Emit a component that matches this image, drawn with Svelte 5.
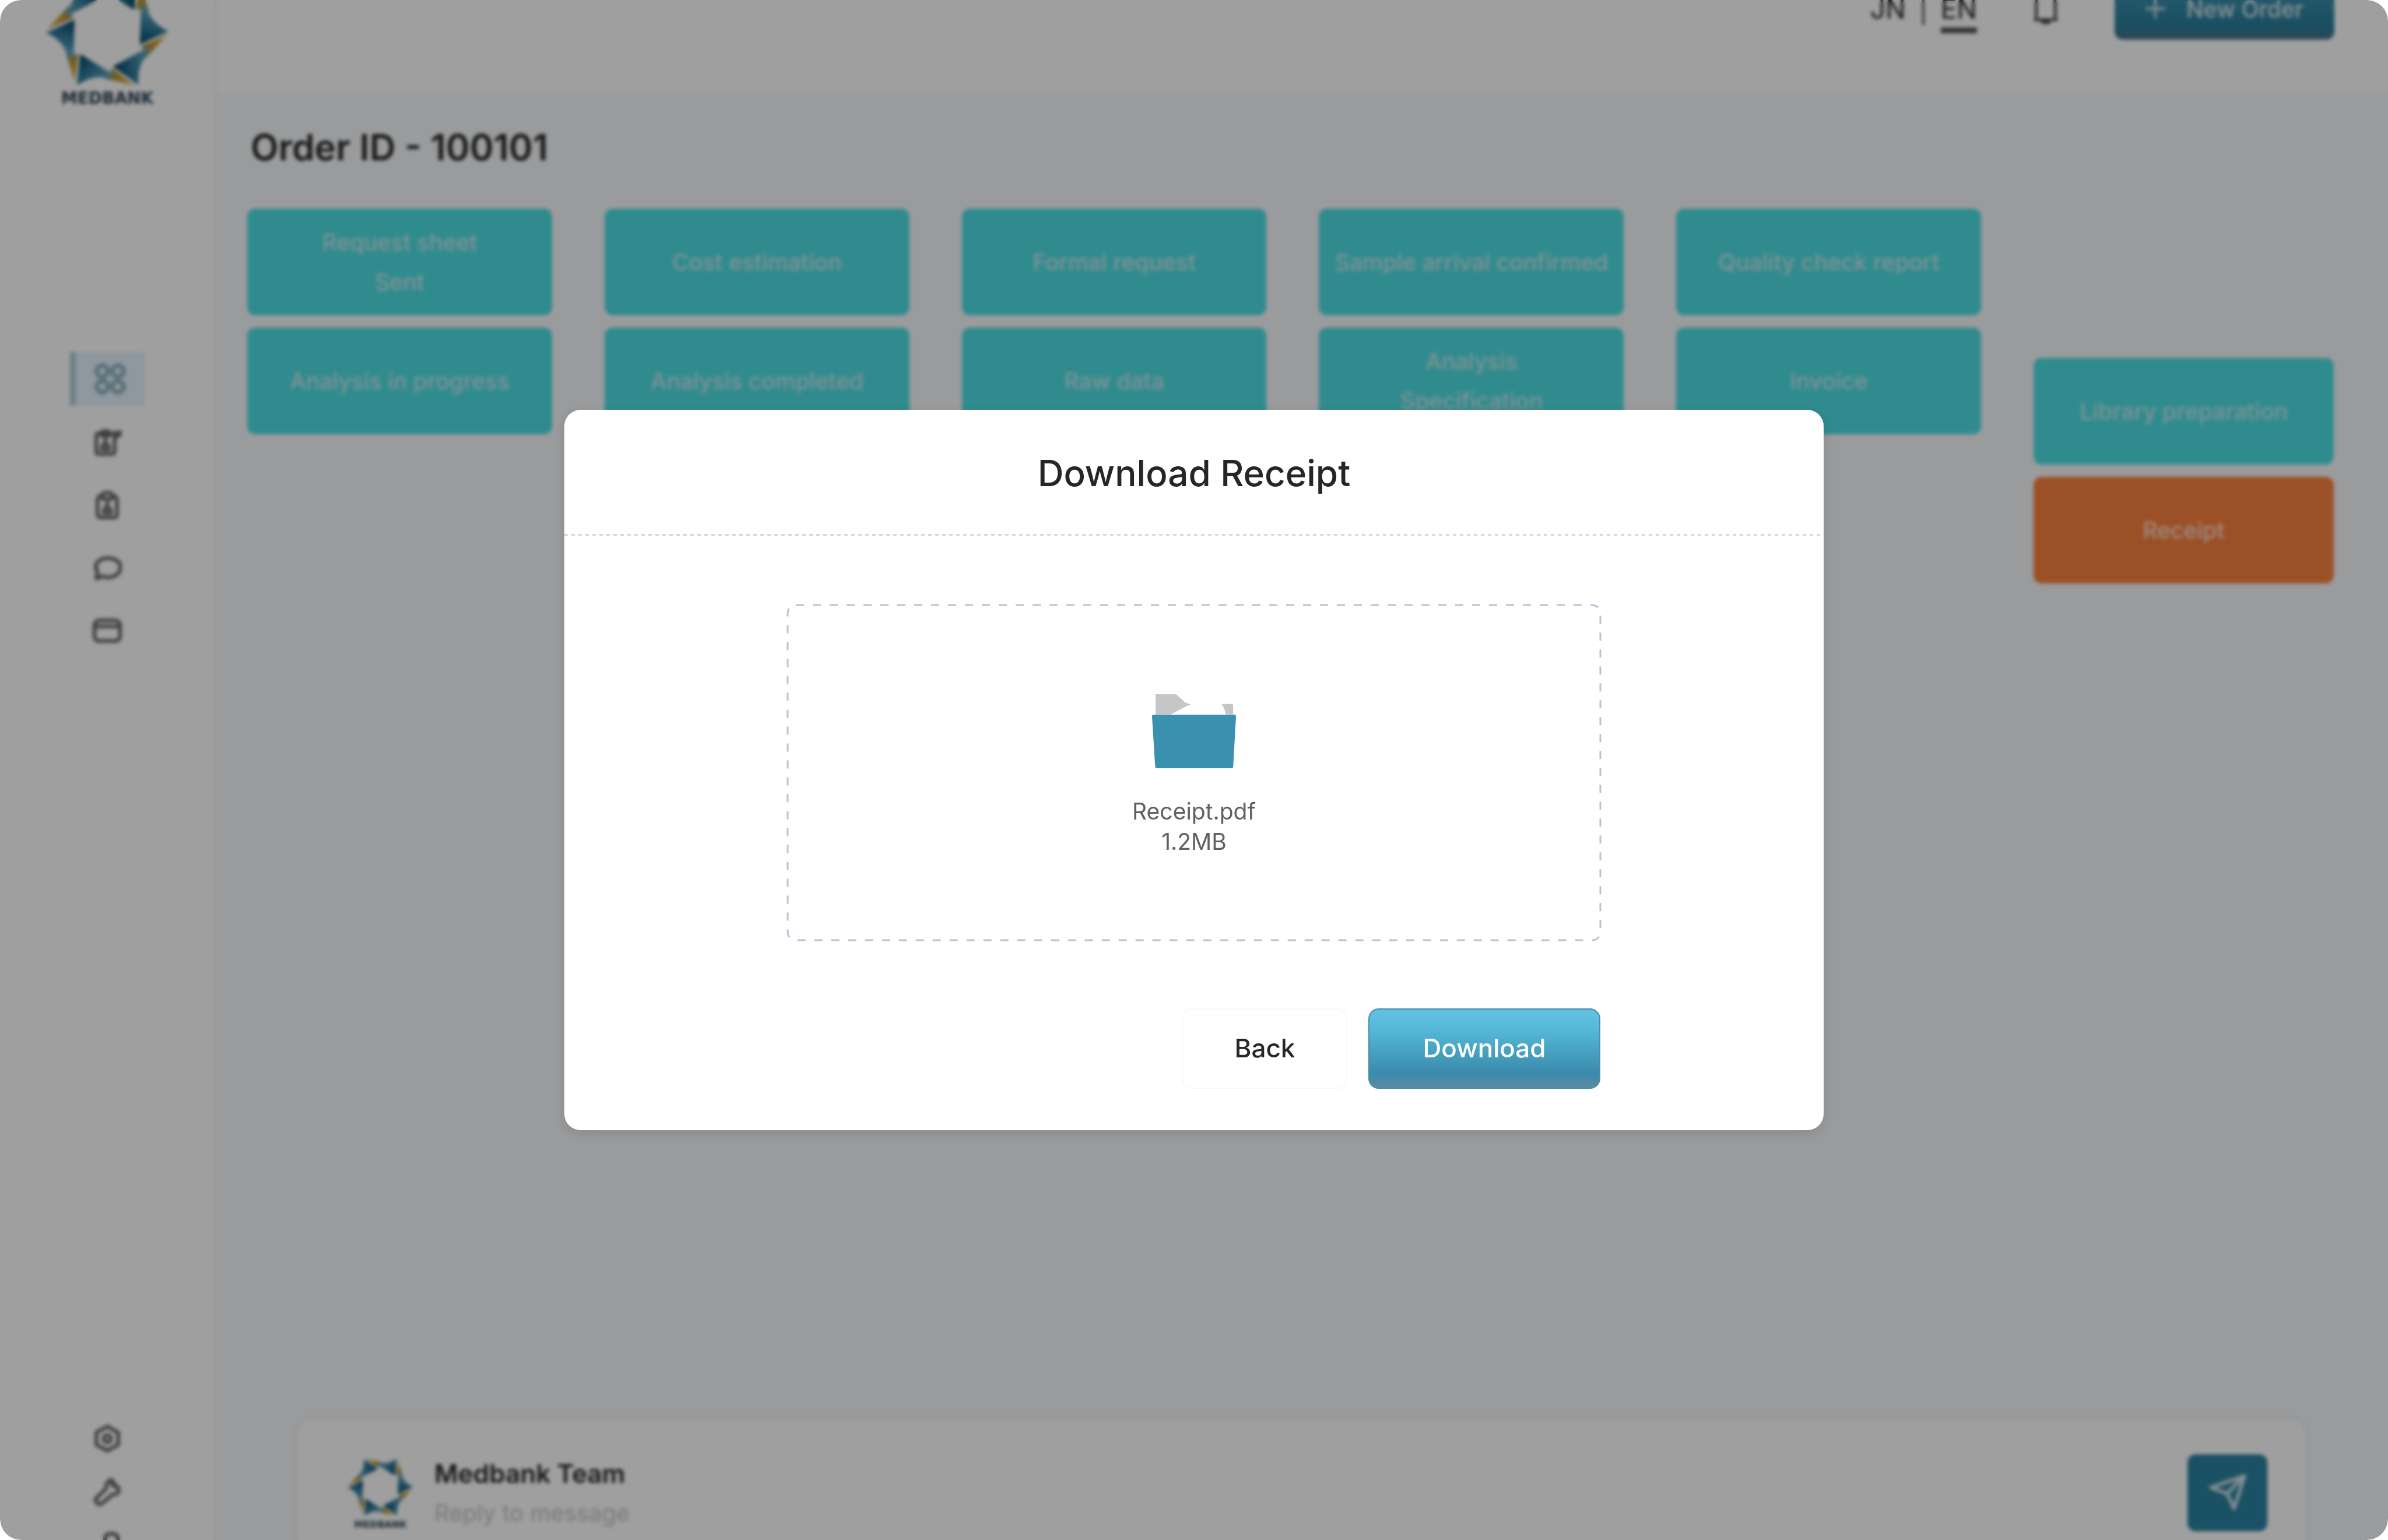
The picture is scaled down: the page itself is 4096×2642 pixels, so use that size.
<script>
  const columns = [
    ['Request sheet\nSent', 'Analysis in progress'],
    ['Cost estimation', 'Analysis completed'],
    ['Formal request', 'Raw data'],
    ['Sample arrival confirmed', 'Analysis\nSpecification'],
    ['Quality check report', 'Invoice'],
    ['Library preparation', 'Receipt']
  ];
  const current = 'Receipt';
  const turns = [0, 60, 120, 180, 240, 300];
  let reply = $state('');
</script>

{#snippet star(id)}
  <defs>
    <linearGradient id="{id}-blue" gradientUnits="userSpaceOnUse" x1="-58" y1="-22" x2="-76" y2="40">
      <stop offset="0" stop-color="#003f5c" />
      <stop offset="0.45" stop-color="#2a7598" />
      <stop offset="1" stop-color="#64a9bd" />
    </linearGradient>
    <linearGradient id="{id}-gold" gradientUnits="userSpaceOnUse" x1="-107" y1="-6" x2="-66" y2="-44">
      <stop offset="0" stop-color="#dcbc60" />
      <stop offset="0.6" stop-color="#c49530" />
      <stop offset="1" stop-color="#6f9a8c" />
    </linearGradient>
  </defs>
  {#each turns as turn}
    <g transform="rotate({turn})">
      <path d="M-107-5Q-86-27-69-46L-61-24Q-84-15-107-5Z" fill="url(#{id}-gold)" />
    </g>
  {/each}
  {#each turns as turn}
    <g transform="rotate({turn})">
      <path d="M-109 1L-58-22L-60 46L-72 40Q-78 16-109 1Z" fill="url(#{id}-blue)" />
    </g>
  {/each}
{/snippet}

<div class="app">
  <aside class="sidebar">
    <a class="brand" href="#home" aria-label="Medbank home">
      <svg class="brand-mark" viewBox="-110 -57 220 157" aria-hidden="true">{@render star('brand')}</svg>
      <span class="brand-name">MEDBANK</span>
    </a>
    <nav class="menu" aria-label="Main">
      <a class="item active" href="#dashboard" aria-label="Dashboard">
        <svg class="grid-icon" viewBox="0 0 24 24"><circle cx="6.5" cy="6.5" r="4" /><circle cx="17.5" cy="6.5" r="4" /><circle cx="6.5" cy="17.5" r="4" /><circle cx="17.5" cy="17.5" r="4" /></svg>
      </a>
      <a class="item" href="#requests" aria-label="Requests">
        <svg viewBox="0 0 24 24"><path d="M18 7v13q0 2-2 2H5q-2 0-2-2V7q0-2 2-2h11M7 5q0-2 3.500-2T14 5v2H7zM17 5l7-1-4 4M10.500 10v4M7.500 18q0-4 3-4t3 4z" /></svg>
      </a>
      <a class="item" href="#orders" aria-label="Orders">
        <svg viewBox="0 0 24 24"><path d="M16 4q4 1 4 4v12q0 2.500-3 2.500H7q-3 0-3-2.500V8q0-3 4-4M8 4q0-2 4-2t4 2v3H8zM12 10v4M9 18.500q0-4 3-4t3 4z" /></svg>
      </a>
      <a class="item" href="#messages" aria-label="Messages">
        <svg viewBox="0 0 24 24"><path d="M3 21l1-6Q1 11 4 7.500Q7 4 12.500 4Q23 5 23 12Q22 19 13 20Q10 20 8 19Z" /></svg>
      </a>
      <a class="item" href="#billing" aria-label="Billing">
        <svg viewBox="0 0 24 24"><rect x="1.500" y="3.500" width="21" height="17" rx="4" /><path d="M2 8.500h20" /></svg>
      </a>
    </nav>
    <nav class="tools" aria-label="Tools">
      <a class="tool" href="#settings" aria-label="Settings">
        <svg viewBox="0 0 24 24"><path d="M12 2l9 5v10l-9 5-9-5V7z" /><circle cx="12" cy="12" r="3" /></svg>
      </a>
      <a class="tool" href="#maintenance" aria-label="Maintenance">
        <svg viewBox="0 0 24 24"><path d="M11 9Q11 2 16 2L16 6L21 8Q23 14 16 14L8 21Q5 23 3 20Q1 18 4 16Z" /><path d="M16 3l5 6" /></svg>
      </a>
      <a class="tool" href="#account" aria-label="Account">
        <svg viewBox="0 0 24 24"><path d="M10 9V7Q10 2 15.500 2T21 7v4M3 11h18v11H3z" /></svg>
      </a>
    </nav>
  </aside>

  <main class="main">
    <header class="topbar">
      <div class="actions">
        <div class="langs">
          <a class="lang" href="#jn">JN</a>
          <span class="rule"></span>
          <a class="lang chosen" href="#en">EN</a>
        </div>
        <button class="bell" aria-label="Notifications">
          <svg viewBox="0 0 48 60"><path d="M7 50V20Q7 6 24 6T41 20V50M5 50H43M18 55H30" /></svg>
        </button>
        <button class="new-order">
          <svg viewBox="0 0 36 36" aria-hidden="true"><path d="M18 2v32M2 18h32" /></svg>
          New Order
        </button>
      </div>
    </header>

    <section class="order">
      <h1>Order ID - 100101</h1>
      <div class="steps">
        {#each columns as column}
          <div class="column">
            {#each column as step}
              <button class="step" class:current={step === current}>{step}</button>
            {/each}
          </div>
        {/each}
      </div>
    </section>

    <form class="composer" onsubmit={(e) => e.preventDefault()}>
      <div class="team-logo">
        <svg viewBox="-110 -110 220 220" aria-hidden="true">{@render star('team')}</svg>
        <span>MEDBANK</span>
      </div>
      <div class="field">
        <label for="reply">Medbank Team</label>
        <input id="reply" placeholder="Reply to message" bind:value={reply} />
      </div>
      <button class="send" aria-label="Send">
        <svg viewBox="0 0 66 66"><path d="M62 4L44 60L32 34L4 24ZM62 4L32 34" /></svg>
      </button>
    </form>
  </main>

  <div class="overlay">
    <div class="dialog" role="dialog" aria-modal="true" aria-labelledby="dialog-title">
      <h2 id="dialog-title">Download Receipt</h2>
      <div class="divider"></div>
      <div class="dialog-body">
        <div class="file">
          <svg class="outline" aria-hidden="true"><rect width="100%" height="100%" rx="14" /></svg>
          <svg class="folder" viewBox="262 164 448 396" aria-hidden="true">
            <path d="M281 164H390L440 208L472 220L445 228L362 272H281ZM632 216H688Q695 216 695 224V272H655Q650 236 632 216Z" fill="#c6c6c6" />
            <path d="M268 274H704Q711 274 710 284L695 552Q694 559 686 559H288Q280 559 279 552L262 284Q262 274 268 274Z" fill="#3990af" />
          </svg>
          <p>Receipt.pdf<br />1.2MB</p>
        </div>
        <div class="buttons">
          <button class="back">Back</button>
          <button class="download">Download</button>
        </div>
      </div>
    </div>
  </div>
</div>

<style>
  :global(body) {
    margin: 0;
    background: #fff;
  }
  .app, .app :global(*) {
    box-sizing: border-box;
  }
  .app {
    position: relative;
    display: flex;
    height: 100vh;
    overflow: hidden;
    border-radius: 36px;
    background: #fff;
    color: #262626;
    font-family: Inter, "Open Sans", sans-serif;
  }
  a {
    color: inherit;
    text-decoration: none;
  }
  button {
    border: 0;
    padding: 0;
    font: inherit;
    cursor: pointer;
  }
  svg {
    display: block;
    fill: none;
    stroke-linecap: round;
    stroke-linejoin: round;
  }

  .sidebar {
    flex: none;
    display: flex;
    flex-direction: column;
    align-items: center;
    width: 368px;
  }
  .brand {
    display: flex;
    flex-direction: column;
    align-items: center;
    height: 604px;
    color: #2c4656;
  }
  .brand-mark {
    width: 212px;
  }
  .brand-name {
    padding-top: 2px;
    font: bold 28px/32px "DejaVu Sans", sans-serif;
  }
  .menu {
    display: flex;
    flex-direction: column;
    gap: 16px;
  }
  .item {
    display: flex;
    align-items: center;
    justify-content: center;
    width: 128px;
    height: 92px;
    border-left: 10px solid transparent;
    padding-right: 10px;
  }
  .item svg, .tool svg {
    width: 50px;
    stroke: #666;
    stroke-width: 3;
  }
  .active {
    border-left-color: #a9cfd8;
    padding-right: 0;
    background: #e5f2ff;
  }
  .item .grid-icon {
    width: 58px;
    stroke: #8cb3bd;
  }
  .tools {
    display: flex;
    flex-direction: column;
    height: 220px;
    margin-top: auto;
    overflow: hidden;
  }
  .tool {
    flex: none;
    display: flex;
    align-items: center;
    height: 92px;
  }

  .main {
    flex: 1;
    display: flex;
    flex-direction: column;
    min-width: 0;
    border-left: 4px solid #f0f3f6;
    background: #f7f9fc;
  }
  .topbar {
    display: flex;
    align-items: flex-end;
    justify-content: flex-end;
    height: 158px;
    padding: 0 92px 90px;
    background: #fff;
  }
  .actions {
    display: flex;
    align-items: center;
    gap: 66px;
    height: 106px;
  }
  .langs {
    display: flex;
    align-items: center;
    gap: 28px;
    font-size: 46px;
    line-height: 44px;
  }
  .rule {
    width: 4px;
    height: 56px;
    background: #555;
  }
  .chosen {
    padding: 20px 0 10px;
    border-bottom: 10px solid #555;
  }
  .bell {
    display: flex;
    align-items: center;
    justify-content: center;
    width: 104px;
    height: 104px;
    border: 2px solid #fafafa;
    border-radius: 50%;
    background: none;
  }
  .bell svg {
    width: 46px;
    stroke: #444;
    stroke-width: 5;
  }
  .new-order {
    display: flex;
    align-items: center;
    justify-content: center;
    gap: 36px;
    width: 377px;
    height: 106px;
    border-radius: 14px;
    background: linear-gradient(#60c0e2, #3a8fae 30%, #297e9b 78%, #4c7286);
    color: #dce8ee;
    font-size: 39px;
    font-weight: 500;
  }
  .new-order svg {
    width: 34px;
    stroke: currentColor;
    stroke-width: 4;
  }

  .order {
    padding: 60px 93px 0 52px;
  }
  h1 {
    margin: 0 0 70px;
    padding-left: 6px;
    font-size: 62px;
    font-weight: 600;
    line-height: 70px;
  }
  .steps {
    display: grid;
    grid-template-columns: repeat(5, 523fr) 515fr;
    gap: 90px;
  }
  .column {
    display: flex;
    flex-direction: column;
    gap: 21px;
  }
  .column:last-child {
    padding-top: 256px;
  }
  .step {
    height: 183px;
    border-radius: 14px;
    background: #4ddfe4;
    color: #cdebed;
    font-size: 39px;
    font-weight: 500;
    line-height: 68px;
    white-space: pre-line;
  }
  .current {
    background: #fa803d;
    color: #fbe0cf;
  }

  .composer {
    display: flex;
    align-items: flex-start;
    height: 209px;
    margin: auto 138px 0 135px;
    padding: 59px 66px 0 86px;
    border: 3px solid #eef1f4;
    border-bottom: 0;
    border-radius: 26px 26px 0 0;
    background: #fff;
    box-shadow: 0 0 12px #e9edf1;
  }
  .team-logo {
    display: flex;
    flex-direction: column;
    align-items: center;
    color: #2c4656;
    font: bold 16px/16px "DejaVu Sans", sans-serif;
  }
  .team-logo svg {
    width: 113px;
  }
  .field {
    flex: 1;
    display: flex;
    flex-direction: column;
    gap: 16px;
    padding: 6px 0 0 36px;
  }
  .field label {
    font-size: 44px;
    font-weight: 600;
    line-height: 54px;
  }
  .field input {
    width: 100%;
    height: 50px;
    border: 0;
    padding: 0;
    background: none;
    font: 40px/50px Inter, sans-serif;
  }
  .field input::placeholder {
    color: #c4c4c4;
  }
  .send {
    display: flex;
    align-items: center;
    justify-content: center;
    width: 137px;
    height: 132px;
    border-radius: 14px;
    background: #2a83a0;
  }
  .send svg {
    width: 66px;
    stroke: #d4e4ea;
    stroke-width: 6;
  }

  .overlay {
    position: absolute;
    inset: 0;
    display: flex;
    align-items: center;
    justify-content: center;
    background: rgba(0, 0, 0, 0.376);
    backdrop-filter: blur(3px);
  }
  .dialog {
    width: min(2160px, 90%);
    border-radius: 28px;
    background: #fff;
    box-shadow: 0 6px 24px rgba(0, 0, 0, 0.12);
  }
  h2 {
    margin: 0;
    padding: 69px 0 64px;
    font-size: 62px;
    font-weight: 500;
    line-height: 80px;
    text-align: center;
  }
  .divider {
    height: 3px;
    background: repeating-linear-gradient(90deg, #d6d6d6 0 6px, #fff 6px 12px);
  }
  .dialog-body {
    padding: 119px 383px 71px;
  }
  .file {
    position: relative;
    display: flex;
    flex-direction: column;
    align-items: center;
    justify-content: center;
    height: 575px;
    padding-top: 10px;
  }
  .outline {
    position: absolute;
    inset: 0;
    width: 100%;
    height: 100%;
    overflow: visible;
  }
  .outline rect {
    stroke: #bcc1da;
    stroke-width: 3;
    stroke-dasharray: 14 15;
    stroke-linecap: butt;
  }
  .folder {
    width: 144px;
  }
  .file p {
    margin: 47px 0 0;
    color: #606060;
    font-size: 39px;
    line-height: 52px;
    text-align: center;
  }
  .buttons {
    display: flex;
    justify-content: flex-end;
    gap: 35px;
    margin-top: 117px;
  }
  .back, .download {
    height: 138px;
    border-radius: 18px;
    font-size: 44px;
    font-weight: 500;
    line-height: 54px;
    padding-bottom: 2px;
  }
  .back {
    width: 285px;
    border: 2px solid #f8f8fc;
    background: #fff;
    color: #262626;
  }
  .download {
    width: 398px;
    border: 2px solid #4b8ea5;
    background: linear-gradient(#60c0e2 8%, #55bad8 24%, #3a8aac 82%, #5b8ba3);
    color: #fff;
  }
</style>
